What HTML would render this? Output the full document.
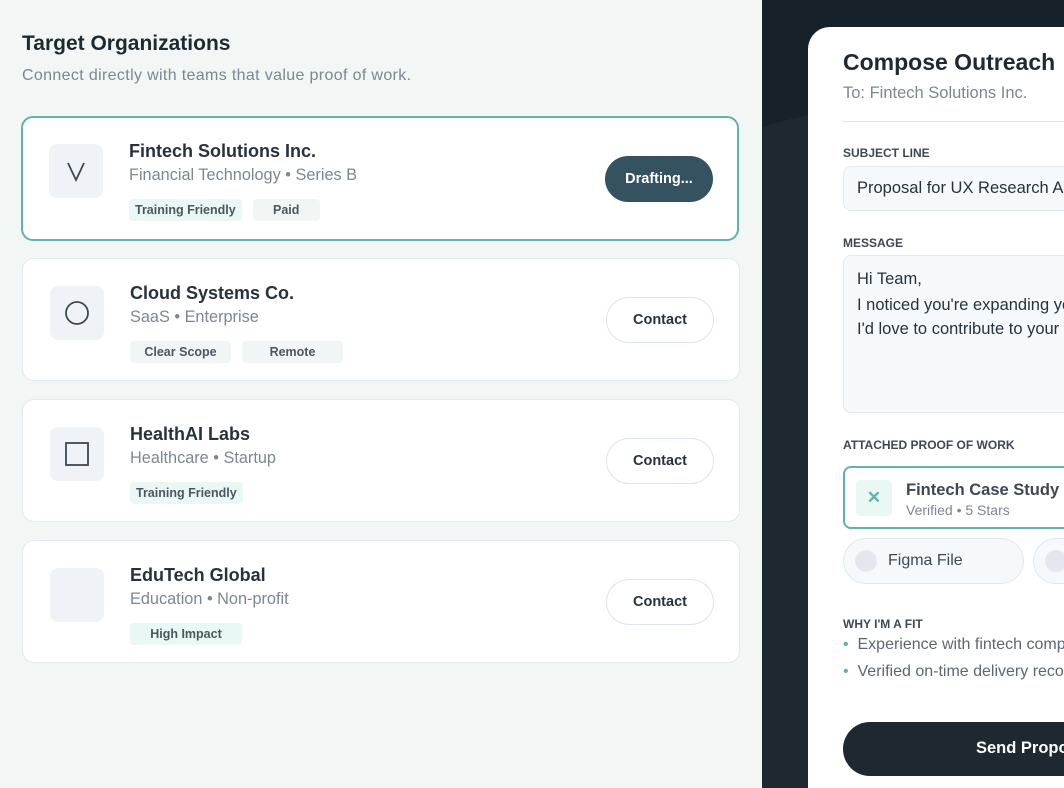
<!DOCTYPE html>
<html><head><meta charset="utf-8"><style>
*{box-sizing:border-box;margin:0;padding:0}
html,body{width:1064px;height:788px;overflow:hidden}
body{font-family:"Liberation Sans",sans-serif;background:#f2f6f4;position:relative;color:#1f2933}
.h1{position:absolute;left:22px;top:32px;font-size:21px;font-weight:bold;color:#1e2a33}
.sub{position:absolute;left:22px;top:67px;font-size:16px;letter-spacing:0.35px;color:#7b8794}
.card{position:absolute;left:22px;width:718px;height:123px;background:#fff;border:1px solid #e3e9ee;border-radius:12px}
.card.act{border:2px solid #5fb3ad;left:21px}
.logo{position:absolute;left:27px;top:27px;width:54px;height:54px;background:#eff3f8;border-radius:8px}
.name{position:absolute;left:107px;top:24px;font-size:18px;font-weight:bold;color:#26323d}
.meta{position:absolute;left:107px;top:49px;font-size:16.3px;color:#7b8794}
.tags{position:absolute;left:107px;top:82px;display:flex;gap:11px}
.tag{height:22px;line-height:22px;font-size:12.5px;font-weight:bold;color:#4a5763;border-radius:4px;padding:0 6px}
.t1{background:#e9f8f5}.t2{background:#f1f5f4;width:67px;text-align:center}.t3{background:#f1f5f6;width:101px;text-align:center}
.btn{position:absolute;left:583px;top:38px;width:108px;height:46px;border-radius:23px;border:1px solid #dde5ec;background:#fff;text-align:center;line-height:44px;font-size:14.5px;font-weight:bold;color:#26323d}
.btn.d{background:#34525f;color:#fff;border:none;line-height:46px}
.dark{position:absolute;left:762px;top:0;width:302px;height:788px;background:#17212a;overflow:hidden}
.panel{position:absolute;left:808px;top:27px;width:300px;height:761px;background:#fff;border-radius:22px 0 0 0}
.p{position:absolute;left:843px}
.lbl{font-size:12px;font-weight:bold;color:#3c4853}
.box{background:#f6f9fb;border:1px solid #e3e9ee;border-radius:8px;width:260px}
</style></head><body>
<div class="h1">Target Organizations</div>
<div class="sub">Connect directly with teams that value proof of work.</div>

<div class="card act" style="top:116px;height:125px">
<div class="logo" style="left:26px;top:26px"><svg width="54" height="54"><path d="M19 19 L27 36 L35 19" fill="none" stroke="#3c4853" stroke-width="1.8"/></svg></div>
<div class="name" style="left:106px;top:23px">Fintech Solutions Inc.</div><div class="meta" style="left:106px;top:48px">Financial Technology • Series B</div>
<div class="tags" style="left:106px;top:81px"><div class="tag t1">Training Friendly</div><div class="tag t2">Paid</div></div>
<div class="btn d" style="left:582px;top:38px">Drafting...</div></div>

<div class="card" style="top:258px">
<div class="logo"><svg width="54" height="54"><circle cx="27" cy="27" r="11" fill="none" stroke="#3c4853" stroke-width="1.8"/></svg></div>
<div class="name">Cloud Systems Co.</div><div class="meta">SaaS • Enterprise</div>
<div class="tags"><div class="tag t3">Clear Scope</div><div class="tag t3">Remote</div></div>
<div class="btn">Contact</div></div>

<div class="card" style="top:399px">
<div class="logo"><svg width="54" height="54"><rect x="16" y="16" width="22" height="22" fill="none" stroke="#3c4853" stroke-width="1.8"/></svg></div>
<div class="name">HealthAI Labs</div><div class="meta">Healthcare • Startup</div>
<div class="tags"><div class="tag t1">Training Friendly</div></div>
<div class="btn">Contact</div></div>

<div class="card" style="top:540px">
<div class="logo"></div>
<div class="name">EduTech Global</div><div class="meta">Education • Non-profit</div>
<div class="tags"><div class="tag t1" style="width:112px;text-align:center">High Impact</div></div>
<div class="btn">Contact</div></div>

<div class="dark"><svg width="302" height="788" style="position:absolute;left:0;top:0"><path d="M0 128 Q40 112 120 106 L302 98 L302 788 L0 788 Z" fill="#1e2830"/></svg></div>
<div class="panel"></div>
<div class="p" style="top:49px;font-size:23px;font-weight:bold;color:#1e2a33;white-space:nowrap">Compose Outreach</div>
<div class="p" style="top:84px;font-size:16.5px;color:#7b8794">To: Fintech Solutions Inc.</div>
<div class="p" style="top:121px;width:230px;height:1px;background:#e3e9ee"></div>
<div class="p lbl" style="top:146px">SUBJECT LINE</div>
<div class="p box" style="top:166px;height:45px;font-size:16.5px;color:#26323d;padding:12px 0 0 13px;white-space:nowrap;overflow:hidden">Proposal for UX Research Assistance</div>
<div class="p lbl" style="top:236px">MESSAGE</div>
<div class="p box" style="top:255px;height:158px;font-size:16.5px;color:#26323d;padding:11px 0 0 13px;white-space:nowrap;overflow:hidden;line-height:24px">Hi Team,<br><div style="margin-top:2px">I noticed you're expanding your research<br>I'd love to contribute to your team</div></div>
<div class="p lbl" style="top:438px">ATTACHED PROOF OF WORK</div>
<div class="p" style="top:466px;width:260px;height:63px;border:2px solid #5fb3ad;border-radius:8px;background:#fff">
<div style="position:absolute;left:11px;top:12px;width:36px;height:36px;background:#e9f8f5;border-radius:4px;color:#5fb3ad;text-align:center;line-height:36px;font-size:17px;font-weight:bold">✕</div>
<div style="position:absolute;left:61px;top:13px;font-size:16.5px;font-weight:bold;color:#3c4853;white-space:nowrap">Fintech Case Study</div>
<div style="position:absolute;left:61px;top:34px;font-size:14px;color:#7b8794">Verified • 5 Stars</div></div>
<div class="p" style="top:538px;width:181px;height:46px;border:1px solid #e3e9ee;border-radius:23px;background:#f6f9fb"><div style="position:absolute;left:11px;top:11px;width:22px;height:22px;border-radius:50%;background:#e4e8ee"></div><div style="position:absolute;left:44px;top:13px;font-size:16px;color:#3c4853">Figma File</div></div>
<div class="p" style="left:1033px;top:538px;width:100px;height:46px;border:1px solid #e3e9ee;border-radius:23px;background:#f6f9fb"><div style="position:absolute;left:11px;top:11px;width:22px;height:22px;border-radius:50%;background:#e4e8ee"></div></div>
<div class="p lbl" style="top:617px">WHY I'M A FIT</div>
<div class="p" style="top:636px;font-size:16px;color:#5b6773;white-space:nowrap"><span style="color:#5fb3ad">•</span>&nbsp; Experience with fintech compliance</div>
<div class="p" style="top:663px;font-size:16px;color:#5b6773;white-space:nowrap"><span style="color:#5fb3ad">•</span>&nbsp; Verified on-time delivery record</div>
<div class="p" style="top:722px;width:300px;height:54px;border-radius:27px;background:#1e2830;color:#fff;font-size:16.5px;font-weight:bold;padding:17px 0 0 133px;white-space:nowrap;overflow:hidden">Send Proposal</div>
</body></html>
